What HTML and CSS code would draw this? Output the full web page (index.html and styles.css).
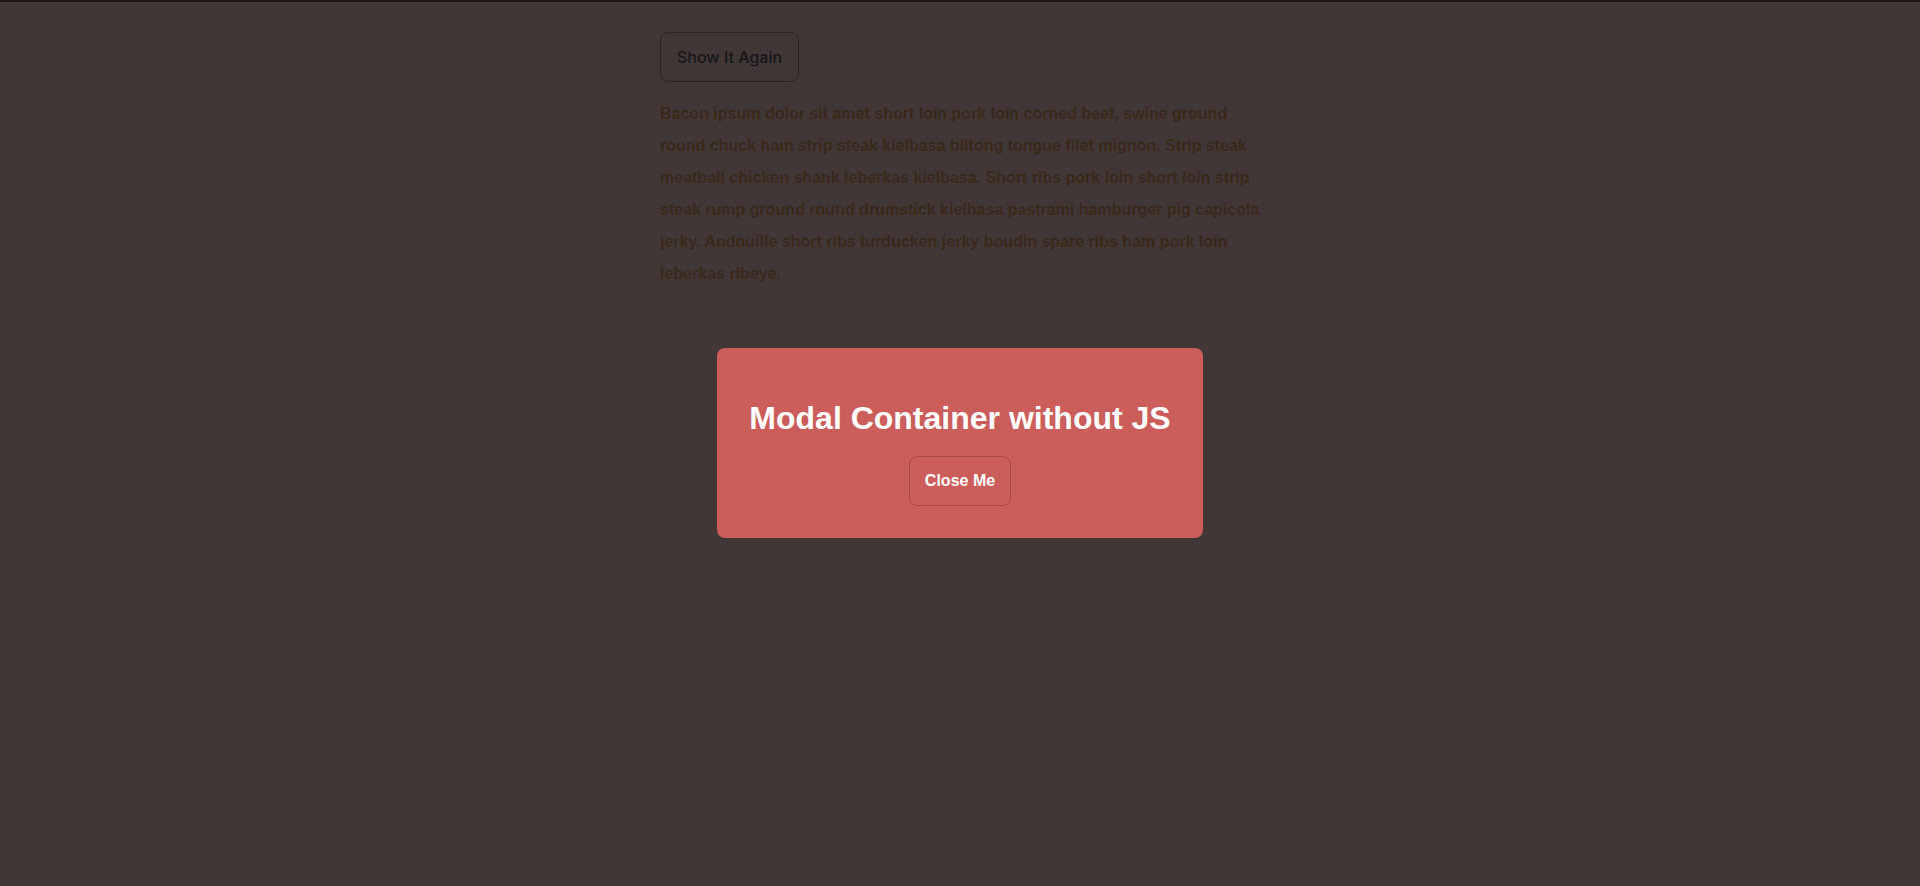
FILE: index.html
```html
<!DOCTYPE html>
<html lang="en">
<head>
<meta charset="utf-8">
<title>Modal Container without JS</title>
<link rel="stylesheet" href="styles.css">
</head>
<body>
<div class="page">
  <button class="show-btn" type="button">Show It Again</button>
  <p class="copy">Bacon ipsum dolor sit amet short loin pork loin corned beef, swine ground round chuck ham strip steak kielbasa biltong tongue filet mignon. Strip steak meatball chicken shank leberkas kielbasa. Short ribs pork loin short loin strip steak rump ground round drumstick kielbasa pastrami hamburger pig capicola jerky. Andouille short ribs turducken jerky boudin spare ribs ham pork loin leberkas ribeye.</p>
</div>
<div class="overlay">
  <div class="modal">
    <h1 class="modal-title">Modal Container without JS</h1>
    <button class="close-btn" type="button">Close Me</button>
  </div>
</div>
</body>
</html>
```

FILE: styles.css
```css
html, body {
  margin: 0;
  padding: 0;
}
body {
  background: #403736;
  border-top: 2px solid #1b1716;
  min-height: 884px;
  font-family: "Liberation Sans", Arial, sans-serif;
}
.page {
  width: 600px;
  margin: 0 auto;
  padding-top: 30px;
}
.show-btn {
  display: block;
  margin: 0;
  padding: 15px 16px;
  background: transparent;
  border: 1px solid #2c2625;
  border-radius: 8px;
  color: #17161a;
  font-family: Inter, "Liberation Sans", sans-serif;
  font-weight: 500;
  font-size: 16px;
  line-height: 18px;
}
.copy {
  margin: 16px 0 0;
  font-size: 16px;
  font-weight: bold;
  line-height: 32px;
  color: #3b2819;
}
.overlay {
  position: fixed;
  inset: 0;
  display: flex;
  align-items: center;
  justify-content: center;
}
.modal {
  background: #cb5d5b;
  border-radius: 8px;
  padding: 32px;
  text-align: center;
  color: #ffffff;
}
.modal-title {
  margin: 20px 0 19px;
  font-size: 32px;
  font-weight: bold;
}
.close-btn {
  margin: 0;
  padding: 15px;
  background: transparent;
  border: 1px solid #a64a4a;
  border-radius: 8px;
  color: #ffffff;
  font-family: "Liberation Sans", Arial, sans-serif;
  font-weight: bold;
  font-size: 16px;
  line-height: 18px;
}
```
